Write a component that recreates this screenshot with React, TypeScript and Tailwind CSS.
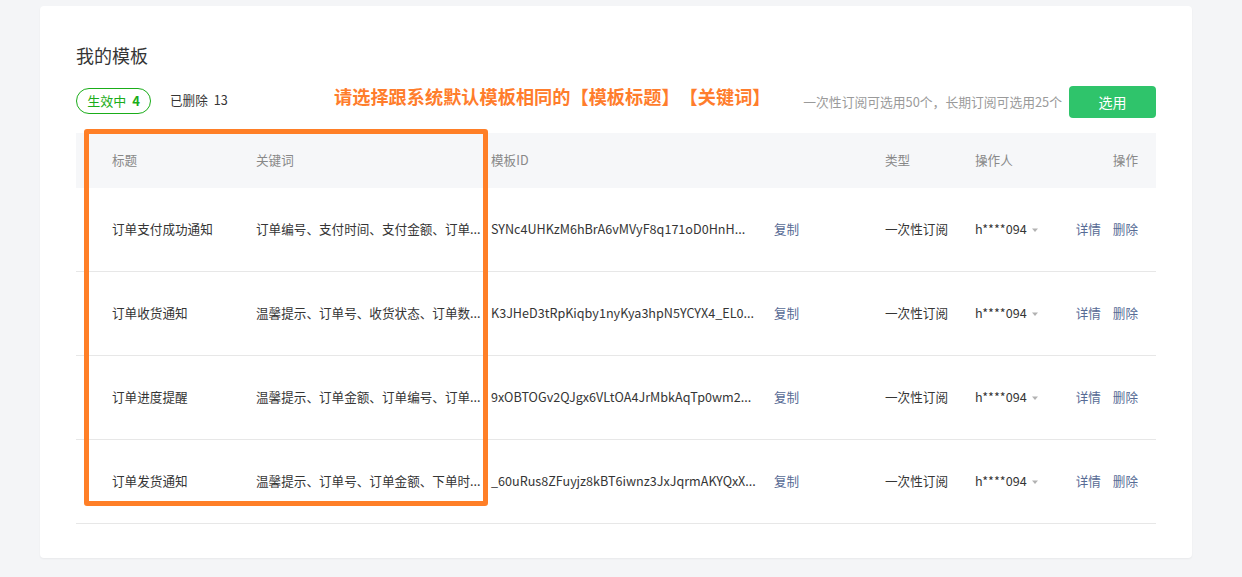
import React from 'react';

const rows = [
  {
    title: '订单支付成功通知',
    keywords: '订单编号、支付时间、支付金额、订单...',
    id: 'SYNc4UHKzM6hBrA6vMVyF8q171oD0HnH...',
  },
  {
    title: '订单收货通知',
    keywords: '温馨提示、订单号、收货状态、订单数...',
    id: 'K3JHeD3tRpKiqby1nyKya3hpN5YCYX4_EL0...',
  },
  {
    title: '订单进度提醒',
    keywords: '温馨提示、订单金额、订单编号、订单...',
    id: '9xOBTOGv2QJgx6VLtOA4JrMbkAqTp0wm2...',
  },
  {
    title: '订单发货通知',
    keywords: '温馨提示、订单号、订单金额、下单时...',
    id: '_60uRus8ZFuyjz8kBT6iwnz3JxJqrmAKYQxX...',
  },
];

const font = "font-['Microsoft_YaHei','Noto_Sans_CJK_SC',sans-serif] [text-spacing-trim:space-all]";

const Caret = () => (
  <svg width="8" height="8" viewBox="0 0 8 8" className="ml-[4px] mt-[1px]">
    <path d="M1 2.5 L7 2.5 L4 6 Z" fill="#b2b2b2" />
  </svg>
);

export default function App() {
  return (
    <div className={`h-[577px] w-full bg-[#f4f5f7] pt-[6px] ${font}`}>
      <div className="relative ml-[40px] h-[552px] w-[1152px] rounded-[4px] bg-white px-[36px] pt-[37px] shadow-[0_1px_2px_rgba(0,0,0,0.05)]">
        <h1 className="text-[18px] leading-[24px] text-[#353535]">我的模板</h1>

        <div className="mt-[19px] flex h-[32px] items-center">
          <div className="-mt-[3px] flex h-[26px] w-[75px] items-center justify-center rounded-full border border-[#1aad19] text-[13px] text-[#1aad19]">
            生效中<span className="ml-[6px] font-semibold">4</span>
          </div>
          <div className="-mt-[3px] ml-[19px] text-[12.6px] text-[#353535]">
            已删除<span className="ml-[6px]">13</span>
          </div>
          <div className="ml-auto whitespace-nowrap text-[12.8px] text-[#9a9a9a]">一次性订阅可选用50个，长期订阅可选用25个</div>
          <button className="ml-[7px] h-[32px] w-[87px] rounded-[4px] bg-[#2fc46b] text-[14px] text-white">选用</button>
        </div>

        <div className="mt-[15px] w-[1080px] text-[12.6px]">
          <div className="flex h-[55px] items-center bg-[#f6f7f9] pr-[18px] text-[#888888]">
            <div className="w-[180px] pl-[36px]">标题</div>
            <div className="w-[235px]">关键词</div>
            <div className="w-[394px]">模板ID</div>
            <div className="w-[90px]">类型</div>
            <div className="flex-1">操作人</div>
            <div>操作</div>
          </div>
          {rows.map((r) => (
            <div key={r.title} className="flex h-[84px] items-center border-b border-[#e7e7e7] pr-[18px] text-[#353535]">
              <div className="w-[180px] pl-[36px]">{r.title}</div>
              <div className="w-[235px] whitespace-nowrap">{r.keywords}</div>
              <div className="flex w-[394px] items-center">
                <div className="w-[283px] whitespace-nowrap">{r.id}</div>
                <span className="text-[#576b95]">复制</span>
              </div>
              <div className="w-[90px]">一次性订阅</div>
              <div className="flex flex-1 items-center">
                h****094
                <Caret />
              </div>
              <div className="flex gap-[12px] text-[#576b95]">
                <span>详情</span>
                <span>删除</span>
              </div>
            </div>
          ))}
        </div>

        <div className="absolute left-[294px] top-[78px] whitespace-nowrap text-[18.2px] font-bold leading-[24px] text-[#ff7d2c]">
          请选择跟系统默认模板相同的【模板标题】【关键词】
        </div>
        <div className="absolute left-[44px] top-[123px] h-[377px] w-[404px] rounded-[3px] border-[5px] border-[#ff7f27]" />
      </div>
    </div>
  );
}
